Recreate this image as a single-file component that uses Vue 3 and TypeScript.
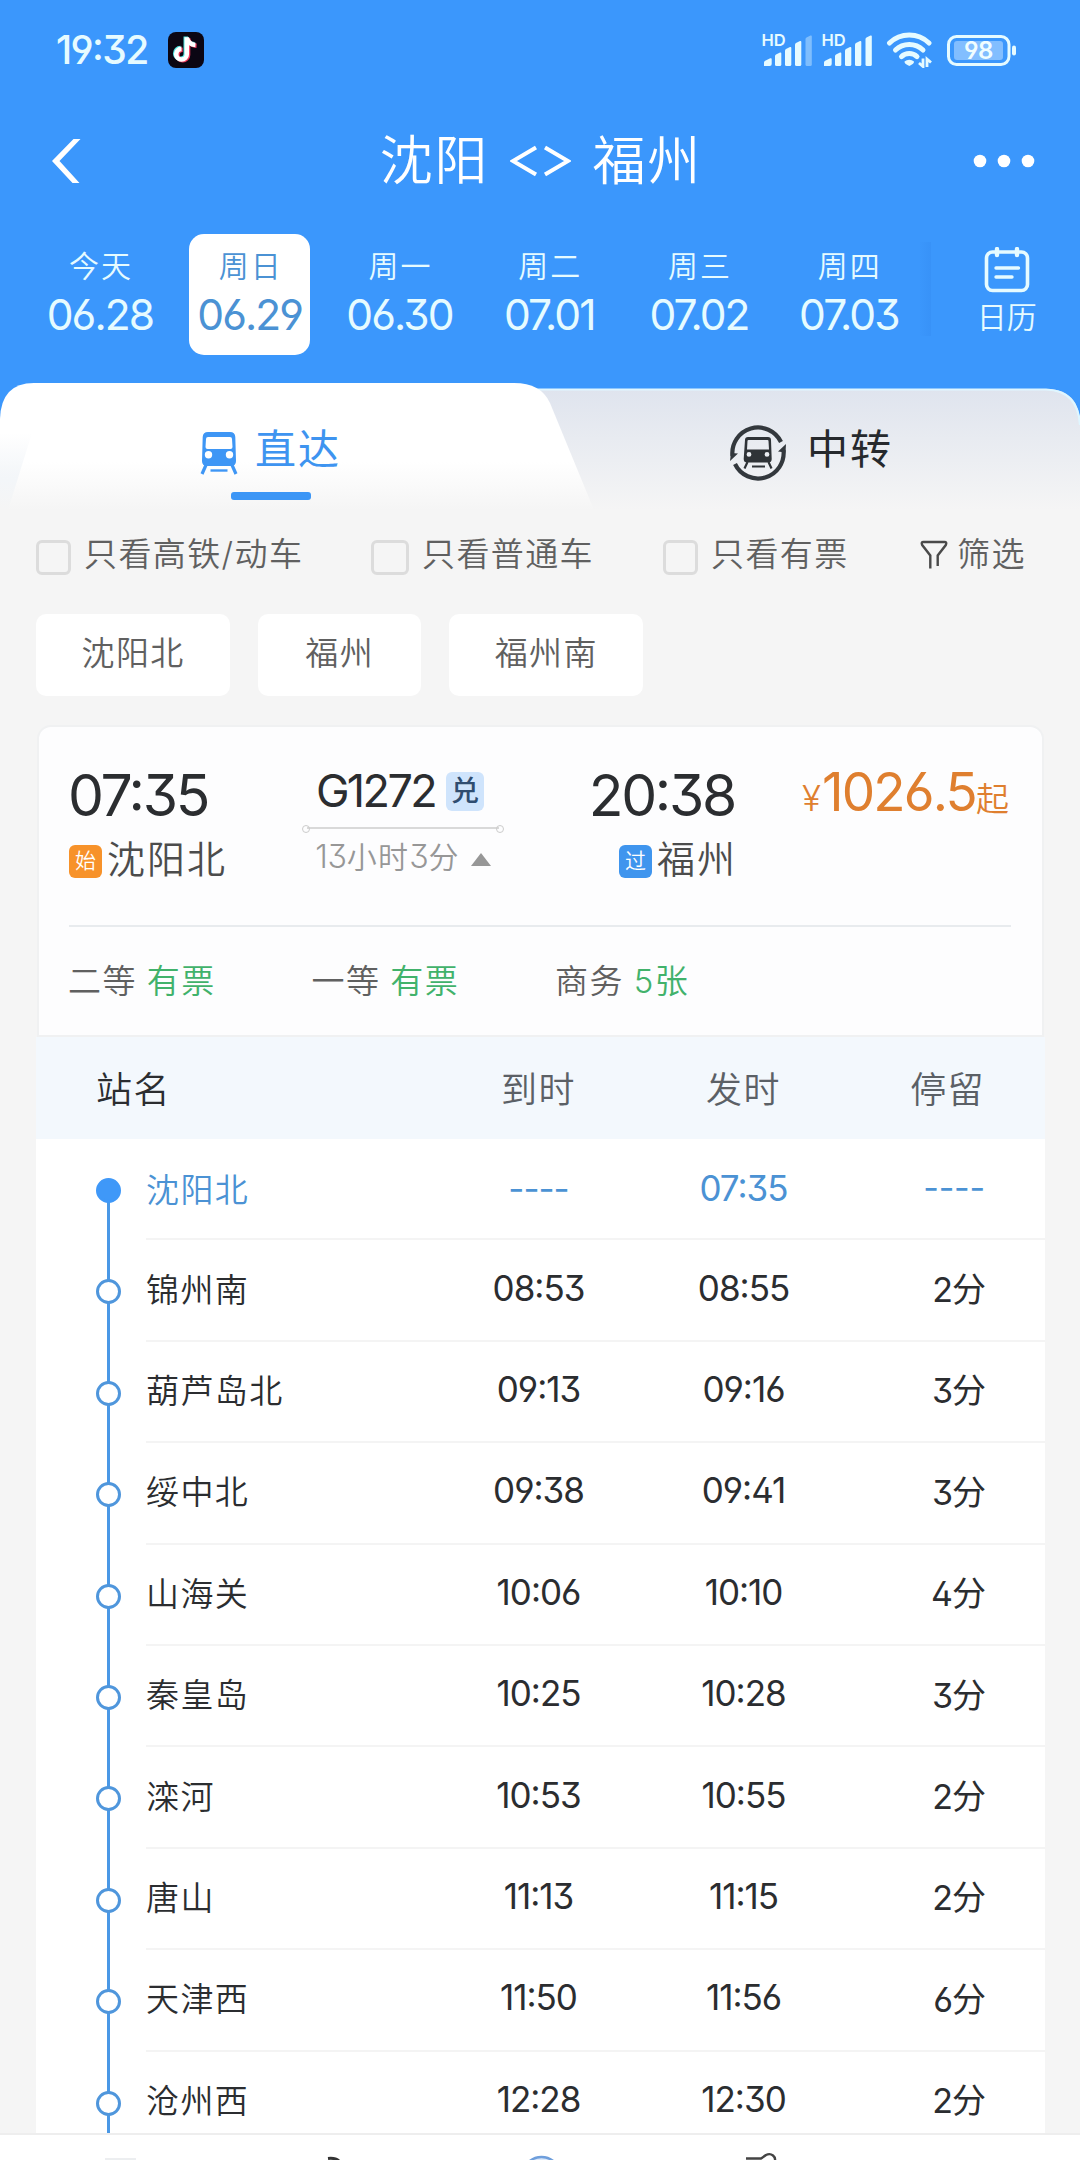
<script setup lang="ts">
interface Day { label: string; date: string; active?: boolean }
interface Stop { name: string; arrive: string; depart: string; stay: string }
interface Seat { name: string; left: string }

const days: Day[] = [
  { label: '今天', date: '06.28' },
  { label: '周日', date: '06.29', active: true },
  { label: '周一', date: '06.30' },
  { label: '周二', date: '07.01' },
  { label: '周三', date: '07.02' },
  { label: '周四', date: '07.03' },
]

const stations: string[] = ['沈阳北', '福州', '福州南']

const seats: Seat[] = [
  { name: '二等', left: '有票' },
  { name: '一等', left: '有票' },
  { name: '商务', left: '5张' },
]

const stops: Stop[] = [
  { name: '沈阳北', arrive: '----', depart: '07:35', stay: '----' },
  { name: '锦州南', arrive: '08:53', depart: '08:55', stay: '2分' },
  { name: '葫芦岛北', arrive: '09:13', depart: '09:16', stay: '3分' },
  { name: '绥中北', arrive: '09:38', depart: '09:41', stay: '3分' },
  { name: '山海关', arrive: '10:06', depart: '10:10', stay: '4分' },
  { name: '秦皇岛', arrive: '10:25', depart: '10:28', stay: '3分' },
  { name: '滦河', arrive: '10:53', depart: '10:55', stay: '2分' },
  { name: '唐山', arrive: '11:13', depart: '11:15', stay: '2分' },
  { name: '天津西', arrive: '11:50', depart: '11:56', stay: '6分' },
  { name: '沧州西', arrive: '12:28', depart: '12:30', stay: '2分' },
]
</script>

<template>
  <div class="app">
    <header class="top">
      <div class="status">
        <span class="clock">19:32</span>
        <svg class="tiktok" width="36" height="36" viewBox="0 0 36 36">
          <rect width="36" height="36" rx="8" fill="#0b0613" />
          <g fill="none" stroke-width="4.6">
            <path d="M18.6 5v17a5.3 5.3 0 1 1-5.3-5.3M18.6 5.5c.6 4 3.8 7 8.6 7.3" stroke="#4fe3df" transform="translate(-.8 -.6)" />
            <path d="M18.6 5v17a5.3 5.3 0 1 1-5.3-5.3M18.6 5.5c.6 4 3.8 7 8.6 7.3" stroke="#f0365a" transform="translate(1.4 1)" />
            <path d="M18.6 5v17a5.3 5.3 0 1 1-5.3-5.3M18.6 5.5c.6 4 3.8 7 8.6 7.3" stroke="#fff" transform="translate(.2 .2)" />
          </g>
        </svg>
        <div class="indicators">
          <svg v-for="n in 2" :key="n" class="signal" width="52" height="34" viewBox="0 0 52 34">
            <text x="-.5" y="13" class="hd">HD</text>
            <g fill="#e6fbff">
              <path d="M2 33v-3.5a2 2 0 0 1 1.200-1.800l5-2.400a1 1 0 0 1 1.500.9V31a2 2 0 0 1-2 2z" />
              <path d="M13 31.500V23q0-1 1-1.500l4-2q1.300-.5 1.300 1v11q0 1.500-1.500 1.500h-3.300Q13 33 13 31.500z" />
              <path d="M23 31.500V17.500q0-1 1-1.500l4-2q1.300-.5 1.300 1v16.500q0 1.500-1.500 1.500h-3.300Q23 33 23 31.500z" />
              <path d="M33 31.500V11.500q0-1 1-1.500l4-2q1.300-.5 1.300 1v22.500q0 1.500-1.500 1.500h-3.300Q33 33 33 31.500z" />
              <path d="M43.500 31.500V6q0-1 1-1.500l4-2q1.300-.5 1.300 1v28q0 1.500-1.500 1.500H45q-1.500 0-1.500-1.500z" :opacity="n === 1 ? 0.4 : 1" />
            </g>
          </svg>
          <svg class="wifi" width="48" height="36" viewBox="0 0 48 36">
            <g fill="none" stroke="#e6fbff" stroke-width="5" stroke-linecap="round">
              <path d="M3.500 11a28.500 28.500 0 0 1 39.500 0" />
              <path d="M9.500 18a19.800 19.800 0 0 1 27.500 0" />
              <path d="M15.500 24.600a11.500 11.500 0 0 1 15.500 0" />
            </g>
            <path d="M18.500 29.500a7 7 0 0 1 9.500 0q.5 2-4.700 4.500-5.300-2.500-4.800-4.500z" fill="#e6fbff" />
            <path d="M37 26.500v8l-4-3.500M41 35v-8l4 3.500" fill="none" stroke="#e6fbff" stroke-width="2.800" />
          </svg>
          <svg class="battery" width="70" height="31" viewBox="0 0 70 31">
            <rect x="1.500" y="1.500" width="60.500" height="28" rx="8" fill="none" stroke="#e6fbff" stroke-width="3" />
            <rect x="7" y="6" width="49" height="19" rx="3" fill="#82beff" />
            <rect x="65" y="10.500" width="4" height="10" rx="2" fill="#e6fbff" />
            <text x="31.500" y="24" text-anchor="middle" class="pct">98</text>
          </svg>
        </div>
      </div>

      <div class="titlebar">
        <svg width="30" height="46" viewBox="0 0 30 46">
          <path d="M28.500 1H21.500L0 23l20.500 22H27.500L7.500 23z" fill="#fff" />
        </svg>
        <h1><span>沈阳</span><svg width="61" height="32" viewBox="0 0 61 32"><path d="M26 2.500 3 16l23 13.500M35 2.500 58 16 35 29.500" fill="none" stroke="#fff" stroke-width="4" /></svg><span>福州</span></h1>
        <svg width="62" height="14" viewBox="0 0 62 14" fill="#fff">
          <circle cx="7" cy="7" r="6.300" /><circle cx="31" cy="7" r="6.300" /><circle cx="55" cy="7" r="6.300" />
        </svg>
      </div>

      <nav class="days">
        <div v-for="d in days" :key="d.date" class="day" :class="{ active: d.active }">
          <span class="label">{{ d.label }}</span>
          <span class="date">{{ d.date }}</span>
        </div>
        <div class="edge"></div>
        <div class="calendar">
          <svg width="46" height="46" viewBox="0 0 46 46" fill="none" stroke="#e6fbff" stroke-linecap="round">
            <rect x="2.500" y="5" width="41" height="38.500" rx="6" stroke-width="3.600" />
            <path d="M13 2v6M33 2v6" stroke-width="4.400" />
            <path d="M12 21h22.500M12 30h16" stroke-width="3.400" />
          </svg>
          <span>日历</span>
        </div>
      </nav>
    </header>

    <section class="tabs">
      <svg class="tabshape" width="1080" height="127" viewBox="0 0 1080 127">
        <defs>
          <linearGradient id="gWhite" x1="0" y1="0" x2="0" y2="1">
            <stop offset="0.62" stop-color="#fff" /><stop offset="1" stop-color="#f5f5f5" />
          </linearGradient>
          <linearGradient id="gGrey" x1="0" y1="0" x2="0" y2="1">
            <stop offset="0" stop-color="#dfe4ee" /><stop offset="1" stop-color="#f5f5f5" />
          </linearGradient>
          <linearGradient id="gSide" x1="0" y1="0" x2="0" y2="1">
            <stop offset="0" stop-color="#f1f4f8" stop-opacity="0" /><stop offset="0.6" stop-color="#f3f6f9" /><stop offset="1" stop-color="#f5f5f5" />
          </linearGradient>
        </defs>
        <rect width="1080" height="60" fill="#3b97fc" />
        <path d="M500 127V6H1048Q1079 7 1080 40V127z" fill="url(#gGrey)" />
        <path d="M530 6.500H1046Q1078 7.500 1080 42" fill="none" stroke="#dff6ff" stroke-width="2.200" />
        <path d="M0 127V36Q1 0 34 0H514Q541 0 550 20L594 127z" fill="url(#gWhite)" />
        <path d="M0 50H32L8 127H0z" fill="url(#gSide)" />
      </svg>
      <div class="tab on">
        <svg width="38" height="44" viewBox="0 0 38 44">
          <path fill="#3e96f5" fill-rule="evenodd" d="M8 1h22q5 0 5.300 5L36 30q0 5-5 5H7q-5 0-5-5L2.700 6Q3 1 8 1zM8 6Q6 6 6 8L5.500 16q0 2 2 2h23q2 0 2-2L32 8q0-2-2-2zM8.500 20a3.700 3.700 0 1 0 0 7.400 3.700 3.700 0 0 0 0-7.400zM29.500 20a3.700 3.700 0 1 0 0 7.400 3.700 3.700 0 0 0 0-7.400z" />
          <path d="M6 34 2 43M32 34l4 9" stroke="#3e96f5" stroke-width="3.200" />
          <path d="M10.500 39.500h17" stroke="#3e96f5" stroke-width="2.400" />
        </svg>
        <span>直达</span>
        <i class="bar"></i>
      </div>
      <div class="tab">
        <svg width="58" height="58" viewBox="0 0 58 58">
          <g fill="none" stroke="#33383d" stroke-width="4.200">
            <path d="M3.500 32A25.600 25.600 0 0 1 52 18" />
            <path d="M54.500 26A25.600 25.600 0 0 1 6 40" />
          </g>
          <path d="M1 37l1-8 7 .5zM57 20l-8 7.500 7.500 1z" fill="#33383d" />
          <path fill="#2f3337" fill-rule="evenodd" d="M19 13h20q3 0 3 3l.7 19q0 3.500-3.500 3.500h-21q-3.500 0-3.500-3.500L16 16q0-3 3-3zM19.500 16q-1 0-1 1L18 25.500h22L39.500 17q0-1-1-1zM20 28a2.400 2.400 0 1 0 0 4.800 2.400 2.400 0 0 0 0-4.800zM38 28a2.400 2.400 0 1 0 0 4.800 2.400 2.400 0 0 0 0-4.800z" />
          <path d="M18.500 38l-3 6.500M39.500 38l3 6.500M23 42.500h13" stroke="#2f3337" stroke-width="2.200" />
        </svg>
        <span>中转</span>
      </div>
    </section>

    <section class="filters">
      <label class="f1"><i></i>只看高铁/动车</label>
      <label class="f2"><i></i>只看普通车</label>
      <label class="f3"><i></i>只看有票</label>
      <div class="sift">
        <svg width="28" height="30" viewBox="0 0 28 30">
          <path d="M10.300 28.500V15.500L2.200 5Q.8 2 3.500 2H24.500Q27.200 2 25.800 5L17.700 15.500V26" fill="none" stroke="#4a4a4a" stroke-width="2.400" />
        </svg>
        <span>筛选</span>
      </div>
    </section>

    <section class="chips">
      <span v-for="s in stations" :key="s">{{ s }}</span>
    </section>

    <article class="card">
      <div class="trip">
        <div class="end">
          <div class="time">07:35</div>
          <div class="station"><em class="start">始</em>沈阳北</div>
        </div>
        <div class="mid">
          <div class="code"><span>G1272</span><em>兑</em></div>
          <div class="rule"></div>
          <div class="span"><b>13</b>小时<b>3</b>分<i></i></div>
        </div>
        <div class="end right">
          <div class="time">20:38</div>
          <div class="station"><em class="pass">过</em>福州</div>
        </div>
        <div class="price"><small>¥</small><strong>1026.5</strong><span>起</span></div>
      </div>
      <div class="seats">
        <div v-for="s in seats" :key="s.name"><span>{{ s.name }}</span><span class="left">{{ s.left }}</span></div>
      </div>
    </article>

    <section class="table">
      <div class="head row">
        <span class="name">站名</span><span>到时</span><span>发时</span><span class="stay">停留</span>
      </div>
      <div v-for="(s, i) in stops" :key="s.name" class="stop" :class="{ first: i === 0 }">
        <div class="track"><i></i></div>
        <div class="row">
          <span class="name">{{ s.name }}</span>
          <span class="num">{{ s.arrive }}</span>
          <span class="num">{{ s.depart }}</span>
          <span class="num stay">{{ s.stay }}</span>
        </div>
      </div>
    </section>

    <footer class="dock">
      <svg width="1080" height="25" viewBox="0 0 1080 25">
        <rect x="105" y="23" width="31" height="2" fill="#eceef0" />
        <path d="M328 23.500q8-1 12 3.500" fill="none" stroke="#333" stroke-width="3" />
        <circle cx="541.500" cy="41" r="19" fill="#dce9fb" stroke="#6f9fdc" stroke-width="2.500" />
        <path d="M746 23.500h15q3-2 5-3.500 4-2 7 .5 2.500 2 2 5" fill="none" stroke="#444" stroke-width="2.400" />
      </svg>
    </footer>
  </div>
</template>

<style>
html, body { margin: 0; background: #f5f5f5; }
</style>

<style scoped>
* { box-sizing: border-box; }
i, em { font-style: normal; }
.app {
  width: 1080px; height: 2160px; overflow: hidden; display: flex; flex-direction: column;
  background: #f5f5f5; color: #2b2d30; position: relative;
  font-family: Inter, "Noto Sans CJK SC", sans-serif; font-weight: 350;
  font-feature-settings: "ss01", "calt";
}
.top { height: 383px; background: #3b97fc; color: #e6fbff; flex: none; }
.status { height: 100px; display: flex; align-items: center; padding: 0 63px 0 56px; }
.clock { font-size: 39px; font-weight: 500; letter-spacing: -1.600px; line-height: 40px; width: 112px; white-space: nowrap; }
.indicators { margin-left: auto; display: flex; align-items: center; }
.signal { margin-right: 8px; overflow: visible; }
.hd { font-size: 16.500px; font-weight: 600; fill: #e6fbff; }
.wifi { margin: 0 13px 0 4px; }
.pct { font-size: 24px; font-weight: 600; fill: #f0fdff; letter-spacing: -.5px; }
.titlebar { height: 122px; display: flex; align-items: center; justify-content: space-between; padding: 0 45px 0 52px; color: #fff; }
h1 { margin: 0 0 0 25px; display: flex; align-items: center; gap: 22px; font-size: 53px; font-weight: 350; line-height: 60px; }
h1 span { letter-spacing: 1.800px; margin-right: -1.800px; }
.days { display: flex; padding-left: 25px; margin-top: 12px; height: 121px; }
.day { width: 149.800px; display: flex; flex-direction: column; align-items: center; padding-top: 15px; }
.day .label { font-size: 30px; line-height: 34px; letter-spacing: 2px; margin-right: -2px; }
.day .date { font-size: 42.500px; line-height: 50px; margin-top: 7px; letter-spacing: -1.900px; font-weight: 400; }
.day.active { color: #4b92d4; background: #fff; border-radius: 15px; width: 121px; margin: 0 14.400px; }
.edge { width: 12px; height: 94px; margin-top: 8px; margin-left: -5px; background: linear-gradient(90deg, rgba(40,120,225,0), rgba(40,120,225,.16)); }
.calendar { width: 60px; margin-left: 46px; display: flex; flex-direction: column; align-items: center; padding-top: 13px; white-space: nowrap; font-size: 30px; line-height: 34px; }
.calendar span { margin-top: 7px; }
.tabs { height: 127px; flex: none; display: flex; position: relative; }
.tabshape { position: absolute; inset: 0; }
.tab { width: 540px; position: relative; display: flex; align-items: center; height: 86px; margin: 27px 0 auto; font-size: 41px; letter-spacing: 2px; padding-left: 189px; font-weight: 400; line-height: 44px; color: #26292d; }
.tab svg { flex: none; }
.tab span { margin: 0 0 8px 20px; }
.tab.on { padding-left: 200px; color: #3e94f0; }
.tab.on span { margin-left: 17px; }
.bar { position: absolute; left: 231px; top: 82px; width: 80px; height: 8px; border-radius: 3px; background: #3c96f6; }
.filters { display: flex; align-items: center; height: 88px; padding-left: 36px; font-size: 33px; letter-spacing: 1.400px; color: #606060; white-space: nowrap; flex: none; }
.filters label { display: flex; align-items: center; line-height: 40px; flex: none; }
.filters label i { width: 35px; height: 35px; border: 3px solid #dcdcdc; border-radius: 6px; margin: 6px 13px 0 0; flex: none; }
.f1 { width: 335px; } .f2 { width: 292px; } .f3 { width: 257px; }
.filters .f2 i { width: 38px; }
.sift { display: flex; align-items: center; gap: 9px; line-height: 40px; }
.sift svg { margin-top: 2px; }
.chips { display: flex; gap: 28px; padding-left: 36px; height: 82px; margin-top: 16px; flex: none; }
.chips span { background: #fff; border-radius: 10px; padding: 0 45.500px; min-width: 163px; text-align: center; font-size: 33px; letter-spacing: 1.400px; line-height: 78px; color: #606060; }
.card { margin: 29px 36px 0 37px; height: 312px; flex: none; background: #fdfdfe; border: 2px solid #f0f1f2; border-radius: 14px 14px 0 0; padding: 0 30px; }
.trip { display: flex; height: 200px; border-bottom: 2px solid #e8ebee; padding-top: 36px; margin-right: 1px; }
.end { width: 232px; }
.time { font-size: 57px; line-height: 66px; letter-spacing: -2.300px; font-weight: 380; margin-left: -1px; }
.station { display: flex; align-items: center; font-size: 38px; letter-spacing: 2px; line-height: 50px; margin-top: 5px; color: #4c4c4c; white-space: nowrap; }
.station em { width: 33px; height: 33px; line-height: 31px; border-radius: 6px; color: #fff; font-size: 21px; text-align: center; margin: 4px 5px 0 0; letter-spacing: 0; }
.start { background: #f7922a; } .pass { background: #3f95ee; }
.mid { width: 204px; display: flex; flex-direction: column; align-items: center; }
.code { display: flex; font-size: 45px; line-height: 55px; letter-spacing: -2.600px; margin-left: -6px; font-weight: 380; }
.code em { width: 38px; height: 39px; border-radius: 6px; background: #cfe4fc; color: #2f4d70; font-size: 28px; line-height: 38px; text-align: center; letter-spacing: 0; margin: 9px 0 0 11px; font-weight: 500; }
.rule { width: 192px; height: 2px; background: #d9d9d9; margin-top: 9px; position: relative; flex: none; }
.rule::before, .rule::after { content: ""; position: absolute; width: 6px; height: 6px; border: 1px solid #ccc; border-radius: 50%; top: -2px; left: -5px; }
.rule::after { left: auto; right: -5px; }
.span { display: flex; align-items: center; font-size: 30px; letter-spacing: 1.300px; line-height: 40px; color: #979797; margin-top: 8px; white-space: nowrap; }
.span b { font-weight: 350; letter-spacing: -.3px; font-size: 32px; }
.span i { border: 10px solid transparent; border-top: 0; border-bottom: 13px solid #979797; margin: 5px 0 0 11px; }
.end.right { width: 230px; text-align: right; }
.end.right .station { justify-content: flex-end; margin-right: -2px; }
.end.right .em { margin-right: 6px; }
.price { margin-left: auto; display: flex; align-items: baseline; color: #df7f2f; line-height: 58px; margin-right: 2px; white-space: nowrap; }
.price small { font-size: 35px; margin-right: 1px; } .price strong { font-size: 53px; font-weight: 400; letter-spacing: -1.800px; } .price span { font-size: 33px; }
.seats { display: flex; height: 104px; align-items: center; font-size: 33px; letter-spacing: 1.400px; color: #606060; margin-left: -1px; }
.seats div { width: 243.500px; display: flex; gap: 10px; }
.seats .left { color: #41b26b; }
.table { margin: 0 35px 0 36px; background: #fff; flex: none; height: 1096px; overflow: hidden; }
.row { display: grid; grid-template-columns: 1fr 205px 205px 139px; align-items: center; padding-right: 60px; text-align: center; }
.row .name { text-align: left; } .row .stay { text-align: right; }
.head { height: 102px; background: #f3f8fd; font-size: 36px; letter-spacing: 1.400px; color: #5b6066; padding-left: 60px; padding-bottom: 2px; }
.stop { height: 101.400px; display: flex; font-size: 33px; letter-spacing: 1.400px; }
.head .name { color: #2b2d30; }
.track { width: 110px; flex: none; padding: 39px 0 0 60px; background: linear-gradient(#4a98e6, #4a98e6) 71px 0 / 3px 100% no-repeat; }
.track i { display: block; width: 25px; height: 25px; border-radius: 50%; border: 3px solid #4f96dc; background: #fff; }
.first .track { background-position: 71px 54px; }
.first .track i { background: #3f98f8; border-color: #3f98f8; }
.stop .row { flex: 1; border-bottom: 2px solid #f4f4f4; padding-bottom: 5px; padding-left: 0; }
.first .row { padding-bottom: 2px; color: #4b92d4; }
.num { font-size: 35px; letter-spacing: -1px; font-weight: 380; }
.stay.num { font-size: 34px; }
.first .stay.num { letter-spacing: -.2px; }
.dock { height: 27px; background: #fff; border-top: 2px solid #eee; flex: none; overflow: hidden; }
</style>
